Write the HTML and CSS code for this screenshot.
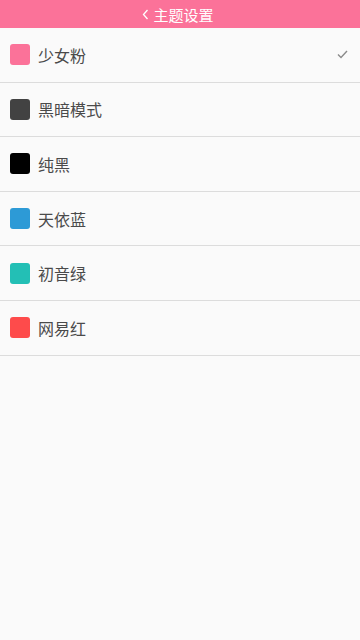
FILE: index.html
```html
<!DOCTYPE html>
<html lang="zh">
<head>
<meta charset="utf-8">
<meta name="viewport" content="width=device-width, initial-scale=1">
<title>主题设置</title>
<link rel="stylesheet" href="styles.css">
</head>
<body>
<header class="bar">
  <div class="title">
    <svg class="back" width="7" height="11" viewBox="0 0 7 11"><path d="M5.5 1 L1.5 5.5 L5.5 10" fill="none" stroke="#fff" stroke-width="1.3"/></svg>
    <span>主题设置</span>
  </div>
</header>
<ul class="list">
  <li class="row"><span class="sw pink"></span><span class="name">少女粉</span>
    <svg class="check" width="11" height="9" viewBox="0 0 11 9"><path d="M1 4.5 L4 7.5 L10 1" fill="none" stroke="#8a8a8a" stroke-width="1.4"/></svg>
  </li>
  <li class="row"><span class="sw dark"></span><span class="name">黑暗模式</span></li>
  <li class="row"><span class="sw black"></span><span class="name">纯黑</span></li>
  <li class="row"><span class="sw blue"></span><span class="name">天依蓝</span></li>
  <li class="row"><span class="sw green"></span><span class="name">初音绿</span></li>
  <li class="row"><span class="sw red"></span><span class="name">网易红</span></li>
</ul>
</body>
</html>
```
FILE: styles.css
```css
html, body {
  margin: 0;
  padding: 0;
  background: #fafafa;
  font-family: Roboto, "Noto Sans CJK SC", sans-serif;
}
.bar {
  height: 28px;
  background: #fb7299;
  display: flex;
  align-items: center;
  justify-content: center;
}
.title {
  display: flex;
  align-items: center;
  gap: 4px;
  color: #fff;
  font-size: 15px;
  margin-left: -4px;
}
.back { display: block; }
.list {
  list-style: none;
  margin: 0;
  padding: 0;
}
.row {
  height: 53.6px;
  border-bottom: 1px solid #dcdcdc;
  display: flex;
  align-items: center;
  padding: 0 12px 0 10px;
}
.sw {
  width: 20px;
  height: 21px;
  border-radius: 3px;
  margin-right: 8px;
}
.pink { background: #fb7299; }
.dark { background: #424242; }
.black { background: #000; }
.blue { background: #2d9ad6; }
.green { background: #23bfb5; }
.red { background: #fe4b4b; }
.name {
  font-size: 16px;
  color: #4a4a4a;
  flex: 1;
}
.check { display: block; }
```
